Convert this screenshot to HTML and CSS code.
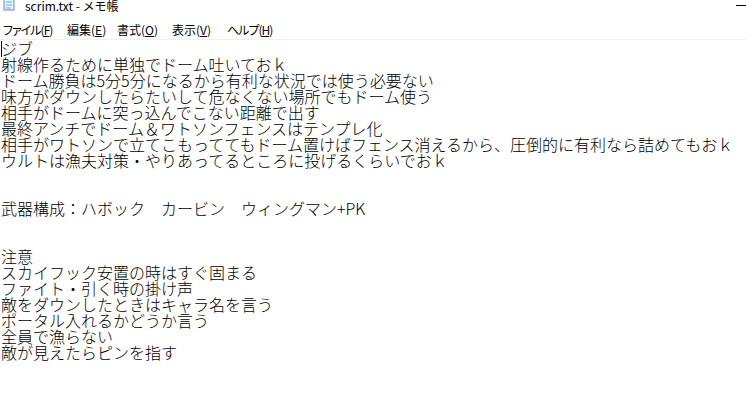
FILE: index.html
```html
<!DOCTYPE html>
<html lang="ja">
<head>
  <meta charset="UTF-8">
  <title>scrim.txt - メモ帳</title>
  <link rel="stylesheet" href="styles.css">
</head>
<body>
  <div class="window">
    <div class="title-bar">
      <svg class="app-icon" width="12" height="12" viewBox="0 0 12 12">
        <rect x="1" y="0" width="10" height="11" fill="#e8f2fb" stroke="#5a8fc4" stroke-width="1"/>
        <line x1="3" y1="3" x2="9" y2="3" stroke="#7fa7cf"/>
        <line x1="3" y1="6" x2="9" y2="6" stroke="#7fa7cf"/>
        <line x1="3" y1="9" x2="8" y2="9" stroke="#7fa7cf"/>
      </svg>
      <span class="title">scrim.txt - メモ帳</span>
      <span class="minimize"></span>
    </div>
    <div class="menu-bar">
      <span class="menu-item narrow">ファイル(<u>F</u>)</span>
      <span class="menu-item">編集(<u>E</u>)</span>
      <span class="menu-item">書式(<u>O</u>)</span>
      <span class="menu-item">表示(<u>V</u>)</span>
      <span class="menu-item narrow">ヘルプ(<u>H</u>)</span>
    </div>
    <div class="editor"><span class="caret"></span><pre class="content">ジブ
射線作るために単独でドーム吐いておｋ
ドーム勝負は5分5分になるから有利な状況では使う必要ない
味方がダウンしたらたいして危なくない場所でもドーム使う
相手がドームに突っ込んでこない距離で出す
最終アンチでドーム＆ワトソンフェンスはテンプレ化
相手がワトソンで立てこもっててもドーム置けばフェンス消えるから、圧倒的に有利なら詰めてもおｋ
ウルトは漁夫対策・やりあってるところに投げるくらいでおｋ


武器構成：ハボック　カービン　ウィングマン+PK


注意
スカイフック安置の時はすぐ固まる
ファイト・引く時の掛け声
敵をダウンしたときはキャラ名を言う
ポータル入れるかどうか言う
全員で漁らない
敵が見えたらピンを指す</pre></div>
  </div>
</body>
</html>
```

FILE: styles.css
```css
body {
  margin: 0;
  padding: 0;
  background-color: #fff;
  font-family: "Noto Sans CJK JP", "Noto Sans", sans-serif;
}

.window {
  width: 746px;
  height: 420px;
  display: flex;
  flex-direction: column;
  overflow: hidden;
  background-color: #fff;
}

.title-bar {
  height: 22px;
  display: flex;
  align-items: flex-start;
  position: relative;
}

.app-icon {
  margin: -1px 0 0 3px;
}

.title {
  margin-left: 10px;
  margin-top: -2px;
  font-size: 12px;
  line-height: 15px;
  color: #000;
}

.minimize {
  position: absolute;
  right: 0;
  top: 5px;
  width: 10px;
  height: 1px;
  background-color: #000;
}

.menu-bar {
  height: 18px;
  display: grid;
  grid-template-columns: 64px 50px 55px 55px auto;
  align-items: start;
  padding-left: 3px;
  border-bottom: 1px solid #f0f0f0;
  font-size: 12px;
  line-height: 15px;
  color: #000;
  font-feature-settings: "palt";
  box-sizing: border-box;
}

.menu-item {
  white-space: nowrap;
}

.menu-item.narrow {
  letter-spacing: -1px;
}

.menu-item u {
  text-underline-offset: 1px;
}

.editor {
  flex: 1;
  position: relative;
}

.caret {
  position: absolute;
  left: 1px;
  top: 1px;
  width: 1px;
  height: 16px;
  background-color: #000;
}

.content {
  margin: 0;
  padding: 0 0 0 1px;
  font-family: "Noto Sans CJK JP", sans-serif;
  font-weight: 300;
  font-size: 16px;
  line-height: 16px;
  color: #000;
  white-space: pre;
}
```
